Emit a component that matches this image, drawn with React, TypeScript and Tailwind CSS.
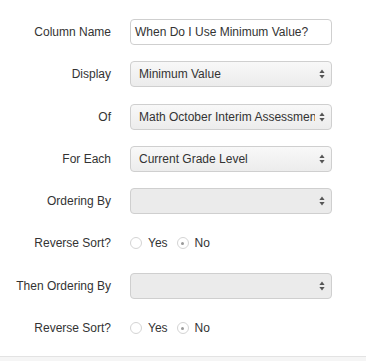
const font = { fontFamily: '"Liberation Sans", Arial, sans-serif' };

function Arrows() {
  return (
    <svg width="6" height="10" viewBox="0 0 6 10" className="shrink-0">
      <path d="M3 0.5 L5.6 4 L0.4 4 Z" fill="#555" />
      <path d="M3 9.5 L5.6 6 L0.4 6 Z" fill="#555" />
    </svg>
  );
}

function Select({ value, disabled }: { value?: string; disabled?: boolean }) {
  return (
    <div
      className={`flex items-center h-[26px] w-[202px] rounded-[4px] border border-[#cfcfcf] pl-[8px] pr-[6px] gap-1 ${
        disabled ? "bg-[#ebebeb]" : "bg-gradient-to-b from-[#f8f8f8] to-[#ececec]"
      }`}
    >
      <span className="flex-1 overflow-hidden whitespace-nowrap text-[12px] text-[#333]">{value}</span>
      <Arrows />
    </div>
  );
}

function Radio({ checked, label }: { checked?: boolean; label: string }) {
  return (
    <label className="flex items-center gap-[6px]">
      <span className="flex items-center justify-center w-[12px] h-[12px] rounded-full border border-[#d4d4d4] bg-white">
        {checked && <span className="w-[3px] h-[3px] rounded-full bg-[#9a9a9a]" />}
      </span>
      <span className="text-[12px] text-[#333]">{label}</span>
    </label>
  );
}

function Row({ label, children }: { label: string; children: React.ReactNode }) {
  return (
    <div className="flex items-center h-[26px]">
      <div className="w-[112px] text-right text-[12px] text-[#333] pr-[1px]">{label}</div>
      <div className="ml-[18px] flex items-center">{children}</div>
    </div>
  );
}

function ReverseSort() {
  return (
    <div className="flex items-center gap-[9px]">
      <Radio label="Yes" />
      <Radio checked label="No" />
    </div>
  );
}

export default function App() {
  return (
    <div className="w-[366px] h-[361px] bg-white flex flex-col" style={font}>
      <div className="flex flex-col gap-[16.3px] pt-[19px] flex-1">
        <Row label="Column Name">
          <div className="flex items-center h-[26px] w-[202px] rounded-[4px] border border-[#cfcfcf] bg-white px-[4px] text-[12px] text-[#333]">
            When Do I Use Minimum Value?
          </div>
        </Row>
        <Row label="Display">
          <Select value="Minimum Value" />
        </Row>
        <Row label="Of">
          <Select value="Math October Interim Assessment" />
        </Row>
        <Row label="For Each">
          <Select value="Current Grade Level" />
        </Row>
        <Row label="Ordering By">
          <Select disabled />
        </Row>
        <Row label="Reverse Sort?">
          <ReverseSort />
        </Row>
        <Row label="Then Ordering By">
          <Select disabled />
        </Row>
        <Row label="Reverse Sort?">
          <ReverseSort />
        </Row>
      </div>
      <div className="h-[5px] border-t border-[#e3e3e3] bg-[#f5f5f5]" />
    </div>
  );
}
